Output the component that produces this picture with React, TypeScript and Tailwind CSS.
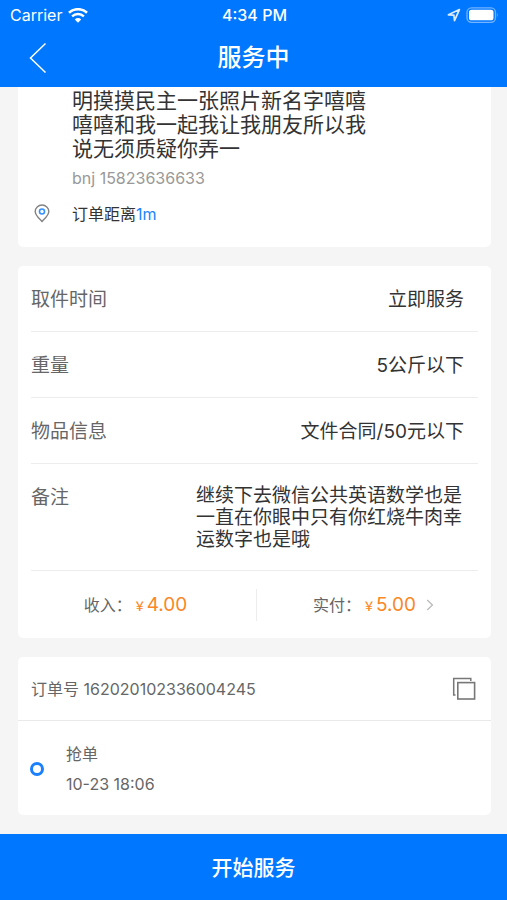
import React from "react";

const details = [
  { label: "取件时间", value: "立即服务" },
  { label: "重量", value: "5公斤以下" },
  { label: "物品信息", value: "文件合同/50元以下" },
];

function StatusBar() {
  return (
    <div className="grid h-[30px] grid-cols-3 items-center pr-2 pl-[10px] text-base leading-5">
      <div className="flex items-center gap-[6px]">
        <span>Carrier</span>
        <svg width="20" height="15" viewBox="0 0 20 15" fill="none" aria-hidden="true">
          <path d="M1 4.8A13 13 0 0 1 19 4.8" stroke="white" strokeWidth="2.6" />
          <path d="M4.1 8.4A8.4 8.4 0 0 1 15.9 8.4" stroke="white" strokeWidth="2.4" />
          <path d="M6.8 11.4A4.6 4.6 0 0 1 13.2 11.4L10 14.7Z" fill="white" />
        </svg>
      </div>
      <span className="text-center font-medium">4:34 PM</span>
      <div className="flex items-center justify-end gap-[5px]">
        <svg width="14" height="14" viewBox="0 0 14 14" fill="none" aria-hidden="true">
          <path d="M12.4 1.6L1.4 6.8L6.9 7.2L7.5 12.6Z" stroke="#dcebff" strokeWidth="1.7" strokeLinejoin="round" />
        </svg>
        <svg width="33" height="17" viewBox="0 0 33 17" fill="none" aria-hidden="true">
          <rect x="1" y="0.8" width="28.5" height="14.5" rx="4.5" stroke="#73b3ff" strokeWidth="1.3" />
          <rect x="3" y="2.8" width="24.5" height="10.5" rx="2.6" fill="white" />
          <path d="M31 5.8Q32.6 8 31 10.3Z" fill="#73b3ff" />
        </svg>
      </div>
    </div>
  );
}

function Price({ label, amount }: { label: string; amount: string }) {
  return (
    <span className="flex items-baseline text-[#666]">
      <span className="text-base leading-6">{label}：</span>
      <span className="mr-px ml-[2px] text-xs font-medium text-[#fa8726]">￥</span>
      <span className="text-[19px] leading-6 text-[#fa8726]">{amount}</span>
    </span>
  );
}

export default function App() {
  return (
    <div className="flex min-h-screen flex-col bg-[#f5f5f5] font-['Inter','Noto_Sans_CJK_SC',sans-serif] text-[#333]">
      <header className="bg-[#0077ff] text-white">
        <StatusBar />
        <div className="grid h-[57px] grid-cols-[60px_1fr_60px] items-center pb-[2px]">
          <button type="button" aria-label="返回" className="flex h-full items-center pl-[29px]">
            <svg width="18" height="32" viewBox="0 0 18 32" fill="none" aria-hidden="true">
              <path d="M16.5 1.5L1.5 16L16.5 30.5" stroke="white" strokeWidth="1.5" />
            </svg>
          </button>
          <h1 className="text-center text-2xl font-medium">服务中</h1>
        </div>
      </header>

      <main className="flex flex-1 flex-col gap-[19px] pr-4 pb-[19px] pl-[18px]">
        <section className="rounded-b-[5px] bg-white pt-[2px] pb-[21px]">
          <div className="pr-[110px] pl-[54px]">
            <p className="text-[21px] leading-6">
              明摸摸民主一张照片新名字嘻嘻
              <br />
              嘻嘻和我一起我让我朋友所以我
              <br />
              说无须质疑你弄一
            </p>
            <p className="mt-[5px] text-base leading-6 text-[#999]">bnj 15823636633</p>
          </div>
          <div className="mt-3 flex items-center text-base leading-6">
            <span className="flex w-[54px] pb-[2px] pl-4">
              <svg width="16" height="19" viewBox="0 0 16 19" fill="none" aria-hidden="true">
                <path d="M8 17.5C6 15.2 1.2 11.5 1.2 7.5A6.8 6.5 0 0 1 14.8 7.5C14.8 11.5 10 15.2 8 17.5Z" stroke="#828282" strokeWidth="1.4" />
                <circle cx="8" cy="7.5" r="2.5" stroke="#3491ff" strokeWidth="1.6" />
              </svg>
            </span>
            <p>
              订单距离<span className="text-[#1a83ff]">1m</span>
            </p>
          </div>
        </section>

        <section className="rounded-[5px] bg-white px-[13px]">
          <dl className="text-[19px]">
            {details.map((item) => (
              <div key={item.label} className="flex h-[66px] items-center justify-between border-b border-[#ededed] pt-1 pr-[14px]">
                <dt className="text-[#666]">{item.label}</dt>
                <dd>{item.value}</dd>
              </div>
            ))}
            <div className="flex justify-between border-b border-[#ededed] pt-[21px] pr-4 pb-[19px] leading-[22px]">
              <dt className="pt-[2px] text-[#666]">备注</dt>
              <dd>
                继续下去微信公共英语数学也是
                <br />
                一直在你眼中只有你红烧牛肉幸
                <br />
                运数字也是哦
              </dd>
            </div>
          </dl>
          <div className="flex h-[67px] items-center">
            <div className="flex h-8 flex-1 items-center justify-center border-r border-[#ededed] pt-px pr-4">
              <Price label="收入" amount="4.00" />
            </div>
            <button type="button" className="flex flex-1 items-center justify-center gap-[10px] pt-px pl-3">
              <Price label="实付" amount="5.00" />
              <svg width="8" height="12" viewBox="0 0 8 12" fill="none" aria-hidden="true">
                <path d="M1.2 1L6.4 6L1.2 11" stroke="#bdbdbd" strokeWidth="1.4" />
              </svg>
            </button>
          </div>
        </section>

        <section className="rounded-[5px] bg-white text-base text-[#666]">
          <div className="flex h-16 items-center justify-between border-b border-[#e9e9e9] pr-[15px] pl-[13px]">
            <p>订单号 162020102336004245</p>
            <button type="button" aria-label="复制订单号">
              <svg width="24" height="24" viewBox="0 0 24 24" fill="none" aria-hidden="true">
                <path d="M3.5 18H1.7V1.5H18.8V4" stroke="#777" strokeWidth="1.5" />
                <rect x="5.8" y="5.6" width="16.8" height="16.4" stroke="#777" strokeWidth="1.6" />
              </svg>
            </button>
          </div>
          <div className="flex h-[94px] items-center gap-[21px] pt-[2px] pl-3">
            <span className="size-[14px] rounded-full border-3 border-[#1a80ff]" />
            <div className="pl-px leading-[30px]">
              <p>抢单</p>
              <p>10-23 18:06</p>
            </div>
          </div>
        </section>
      </main>

      <button type="button" className="h-[66px] bg-[#0077ff] pt-[2px] text-[21px] font-medium text-white">
        开始服务
      </button>
    </div>
  );
}
